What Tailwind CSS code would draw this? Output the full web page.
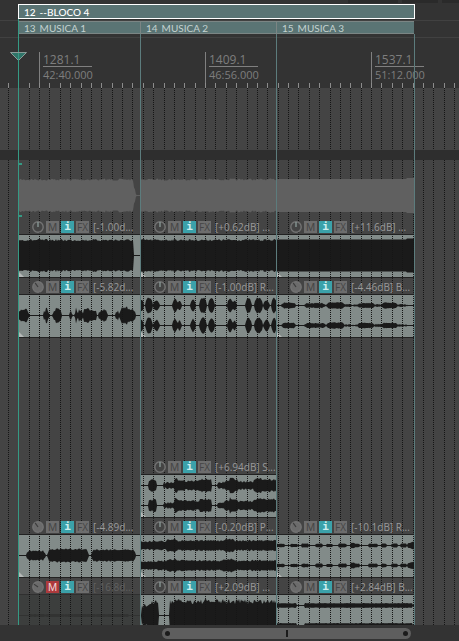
<!DOCTYPE html>
<html lang="pt">
<head>
<meta charset="utf-8">
<meta name="viewport" content="width=device-width, initial-scale=1">
<title>Arrange view</title>
<script src="https://cdn.jsdelivr.net/npm/@tailwindcss/browser@4"></script>
</head>
<body class="bg-[#333333] font-['Open_Sans','Noto_Sans',sans-serif]">
<main class="relative flex h-screen min-h-[320px] flex-col overflow-hidden">

  <!-- toolbar edge -->
  <div class="flex h-1 shrink-0 justify-end gap-1 pb-px" aria-hidden="true">
    <div class="w-[50px] bg-[#2a2a2a]"></div><div class="w-[36px] bg-[#2a2a2a]"></div><div class="w-[17px] bg-[#2a2a2a]"></div>
  </div>

  <!-- regions -->
  <section aria-label="Regions" class="shrink-0 font-['Lato',sans-serif] text-[10px]">
    <div class="grid h-[17px] grid-cols-[18fr_396fr_45fr] border-b border-[#414141]">
      <div class="relative col-start-2 -mr-px flex h-[15px] items-center gap-1 border border-white bg-[#5a7474] pl-[5px] font-medium leading-3 text-white"><span>12</span><span>--BLOCO 4</span></div>
    </div>
    <div class="grid h-[17px] grid-cols-[18fr_122fr_136fr_138fr_45fr] border-b border-[#414141] leading-3 text-[#c3d2d0]">
      <div class="col-start-2 flex h-[13px] items-center gap-1 border-y border-[#7b8584] bg-[#5a7474] pl-1.5"><span>13</span><span>MUSICA 1</span></div>
      <div class="flex h-[13px] items-center gap-1 border-y border-l border-[#7b8584] bg-[#5a7474] pl-[5px]"><span>14</span><span>MUSICA 2</span></div>
      <div class="flex h-[13px] items-center gap-1 border-y border-l border-[#7b8584] bg-[#5a7474] pl-[5px]"><span>15</span><span>MUSICA 3</span></div>
    </div>
  </section>

  <!-- ruler -->
  <section aria-label="Ruler" class="relative h-[50px] shrink-0 text-[#7e7e7e]">
    <div class="grid h-full grid-cols-[39fr_166fr_166fr_88fr] pt-[14px]">
      <div class="col-start-2 border-l border-[#808080] pl-[3px]"><p class="h-[15px] w-[49px] border-b border-[#808080] text-[12px] leading-4">1281.1</p><p class="text-[11px] leading-[15px]">42:40.000</p></div>
      <div class="border-l border-[#808080] pl-[3px]"><p class="h-[15px] w-[49px] border-b border-[#808080] text-[12px] leading-4">1409.1</p><p class="text-[11px] leading-[15px]">46:56.000</p></div>
      <div class="border-l border-[#808080] pl-[3px]"><p class="h-[15px] w-[49px] border-b border-[#808080] text-[12px] leading-4">1537.1</p><p class="text-[11px] leading-[15px]">51:12.000</p></div>
    </div>
    <svg id="ticks" class="absolute inset-x-0 bottom-0 h-[5px] w-full" shape-rendering="crispEdges" stroke="#8c8c8c" aria-hidden="true"></svg>
  </section>

  <!-- arrange -->
  <section aria-label="Tracks" class="relative flex min-h-0 flex-1 flex-col overflow-hidden bg-[#444444]">
    <svg id="beats" class="pointer-events-none absolute inset-0 z-10 h-full w-full" shape-rendering="crispEdges" stroke="#151515" stroke-dasharray="1 1" aria-hidden="true"></svg>
    <div class="h-[62px] shrink-0"></div>
    <div class="relative z-20 h-[10px] shrink-0 bg-[#2e2e2e]"></div>
    <div id="ghost" class="relative z-20 grid h-[58px] shrink-0 grid-cols-[18fr_122fr_136fr_138fr_45fr] pt-[17px]"></div>
    <div id="lanes"></div>
  </section>

  <!-- scrollbar -->
  <footer class="grid h-4 shrink-0 grid-cols-[162fr_249fr_48fr] pt-[3px]">
    <div role="scrollbar" aria-label="Horizontal scroll" aria-controls="lanes" aria-valuenow="50" class="col-start-2 flex h-[11px] items-center justify-between rounded-md bg-[#5e5e5e] px-[3px]">
      <span class="h-[5px] w-[5px] rounded-full bg-[#1b1b1b]"></span><span class="h-[7px] w-[2px] bg-[#1b1b1b]"></span><span class="h-[5px] w-[5px] rounded-full bg-[#1b1b1b]"></span>
    </div>
  </footer>

  <!-- region edges and edit cursor -->
  <svg class="pointer-events-none absolute inset-x-0 top-[34px] z-30 h-[calc(100%-50px)] w-full" viewBox="0 0 459 10" preserveAspectRatio="none" shape-rendering="crispEdges" fill="#5c7c7d" aria-hidden="true">
    <rect x="140" width="1" height="10"/><rect x="276" width="1" height="10"/><rect x="414" width="1" height="10"/>
  </svg>
  <div class="pointer-events-none absolute inset-x-0 bottom-4 top-[19px] z-30 grid grid-cols-[18fr_441fr]" aria-hidden="true">
    <div class="relative col-start-2 border-l border-[#359a84]">
      <svg class="absolute -left-[9px] top-[33px] h-[9px] w-[17px]" viewBox="0 0 17 9"><path d="M.5 .5h16L8.500 8.500z" fill="#2f7569" stroke="#8a9c98"/><path d="M8.500 1v8" stroke="#359a84"/></svg>
      <span class="absolute left-0 top-[144px] h-[2px] w-[3px] bg-[#359a84]"></span>
      <span class="absolute left-0 top-[196px] h-[2px] w-[3px] bg-[#359a84]"></span>
    </div>
  </div>
</main>

<script>
// Beat lines: 16 per ruler label, first label at 39 on a 459-unit timeline
const SPAN = 459;
const beat = k => Math.round(39 + k * 10.375);
let marks = '';
for (let k = -3; beat(k) < SPAN; k++) {
  if (k === -2) continue;
  const x = beat(k) / SPAN * 100 + '%';
  marks += `<line x1="${x}" x2="${x}" y1="0" y2="100%"/>`;
}
for (const id of ['ticks', 'beats']) document.getElementById(id).innerHTML = `<g transform="translate(.5 0)">${marks}</g>`;

// Waveform envelope. seg: [from, to, amplitude, amplitude at end]
let seed = 7;
const rnd = () => (seed = (seed * 16807) % 2147483647) / 2147483647;
function wave(w, mid, segs, jitter, soft) {
  const amp = [];
  for (let x = 0; x <= w; x++) {
    let a = 0.5;
    for (const [s, e, a0, a1 = a0] of segs) if (x >= s && x <= e) {
      const t = (x - s) / Math.max(1, e - s);
      let v = a0 + (a1 - a0) * t;
      if (soft) v *= Math.min(1, 0.6 + Math.min(x - s, e - x) * 0.25);
      a = Math.max(a, v - rnd() * jitter);
    }
    amp.push(a);
  }
  const up = amp.map((a, x) => `${x} ${(mid - a).toFixed(1)}`);
  const down = amp.map((a, x) => `${x} ${(mid + a).toFixed(1)}`).reverse();
  return `<path d="M${up.concat(down).join('L')}z"/>`;
}
const W = [122, 136, 138];
const full = [[[0, 115, 16.5]], [[0, 136, 16.5]], [[0, 131, 16], [131, 138, 17]]];
const jit = [2.2, 2, 0];

document.getElementById('ghost').innerHTML = '<div></div>' + W.map((w, i) =>
  `<svg class="h-[37px] w-full" viewBox="0 0 ${w} 37" preserveAspectRatio="none" fill="#606060" aria-hidden="true">${wave(w, 18.5, i ? full[i].map(([s, e, a]) => [s, e, a + .5]) : [[0, 115, 17], [115, 118, 12, 3]], jit[i])}</svg>`).join('');

// Clips: g gain label, k knob angle, s envelope, m channel centres, j jitter
const mono = [20.5], duo = [10.5, 30.5];
const lanes = [
  [{g: '[-1.00d...', k: 0, s: full[0], m: mono, j: 2.2}, {g: '[+0.62dB] ...', k: 0, s: full[1], m: mono, j: 2}, {g: '[+11.6dB] ...', k: 0, s: full[2], m: mono, j: 0}],
  [{g: '[-5.82d...', k: -35, m: mono, j: 4, soft: 1, s: [[0,11,7],[26,31,8],[35,43,8],[52,54,6],[57,59,10],[60,65,8],[65,78,8],[81,89,8],[98,101,6],[102,117,9]]},
   {g: '[-1.00dB] R...', k: 0, m: duo, j: 1.2, soft: 1, s: [[0,3,7],[6,12,8],[14,19,6],[33,37,7.5],[38,41,6],[51,55,7],[60,66,8],[69,74,8],[88,92,8],[93,96,6],[106,111,8],[115,122,8],[124,129,6],[132,136,8.5]]},
   {g: '[-4.46dB] B...', k: -35, m: duo, j: 1, soft: 1, s: [[6,19,3.2],[29,49,2.8],[49,51,1.2],[51,68,3.6],[68,76,1.6],[76,82,1.1],[82,98,3],[98,106,1.8],[106,121,3.2],[121,131,1.6]]}],
  [], [],
  [null, {g: '[+6.94dB] S...', k: 0, m: duo, j: 2, s: [[9,16,6.5],[24,35,3.5],[35,41,8,6],[41,60,5.5],[60,71,7],[78,90,3,6],[90,97,8.5,7],[97,114,5],[114,124,7.5],[124,136,7]]}, null],
  [{g: '[-4.89d...', k: -35, m: mono, j: 1.5, soft: 1, s: [[9,27,5.5],[30,70,7],[74,117,6.5]]},
   {g: '[-0.20dB] P...', k: 0, m: duo, j: 1.8, s: [[1,27,5],[27,36,7],[36,84,5.8],[84,94,7],[94,136,5.8]]},
   {g: '[-10.1dB] R...', k: -35, m: duo, j: .4, s: [[0,8,1.8],[15,21,1.8],[26,32,2],[40,46,2],[51,56,1.8],[63,70,2],[75,78,3],[78,83,2],[93,101,2],[106,110,2],[116,121,2],[125,130,2],[132,138,2.5,4]]}],
  [{g: '[-16.8d...', k: -55, m: mono, j: .5, s: [[12,110,1.6]], muted: 1},
   {g: '[+2.09dB] ...', k: 0, m: mono, j: 5, s: [[2,6,12],[6,18,12,17],[30,136,16.5]]},
   {g: '[+2.84dB] B...', k: -35, m: duo, j: .3, s: [[0,20,2.4],[29,136,2.4]]}]
];

const knob = a => `<svg viewBox="0 0 12 12" class="h-3 w-3"><circle cx="6" cy="6" r="5.200" fill="${a ? '#6b6b6b' : '#444444'}" stroke="#737373" stroke-width="1.400"/><path d="M6 6V1" stroke="${a ? '#3c3c3c' : '#91a3a0'}" stroke-width="1.200" transform="rotate(${a} 6 6)"/></svg>`;

function clip(c, i) {
  if (!c) return '<div></div>';
  const w = W[i];
  return `<article class="min-w-0">
    <div class="relative z-20 flex h-4 items-end gap-[2px] pb-px pl-[14px] text-[12px] leading-3">
      <button type="button" aria-label="Volume" class="h-3 w-3 shrink-0">${knob(c.k)}</button>
      <button type="button" aria-label="Mute" class="h-3 w-[13px] shrink-0 ${c.muted ? 'bg-[#ad3a3d] text-[#f0d8d8]' : 'bg-[#6d6d6d] text-[#454545]'} font-['Liberation_Sans',sans-serif] text-[11px]">M</button>
      <button type="button" aria-label="Notes" class="h-3 w-[13px] shrink-0 bg-[#3ba1a9] font-['DejaVu_Sans_Mono',monospace] text-[11px] font-bold text-[#cdeeee]">i</button>
      <button type="button" aria-label="Effects" class="h-3 w-[13px] shrink-0 bg-[#6d6d6d] font-['Open_Sans',sans-serif] text-[10px] text-[#454545]">FX</button>
      <span class="whitespace-nowrap pl-[2px] text-[10px] ${c.muted ? 'text-[#606060]' : 'text-[#9a9a9a]'}">${c.g}</span>
    </div>
    <svg class="h-11 w-full border-y ${c.muted ? 'border-[#303030] bg-[#3c3e3d]' : 'border-[#222222] bg-[#828b89]'}" viewBox="0 0 ${w} 42" preserveAspectRatio="none" fill="${c.muted ? '#323332' : '#1a1a1a'}" aria-hidden="true">${c.m.map(y => wave(w, y, c.s, c.j, c.soft)).join('')}${c.muted ? '' : '<path d="M1 37l5 5H1z" fill="#b5b9b8"/>'}</svg>
  </article>`;
}
document.getElementById('lanes').innerHTML = lanes.map(l =>
  `<div class="grid h-[60px] grid-cols-[18fr_122fr_136fr_138fr_45fr]"><div></div>${l.map(clip).join('')}</div>`).join('');
</script>
</body>
</html>
